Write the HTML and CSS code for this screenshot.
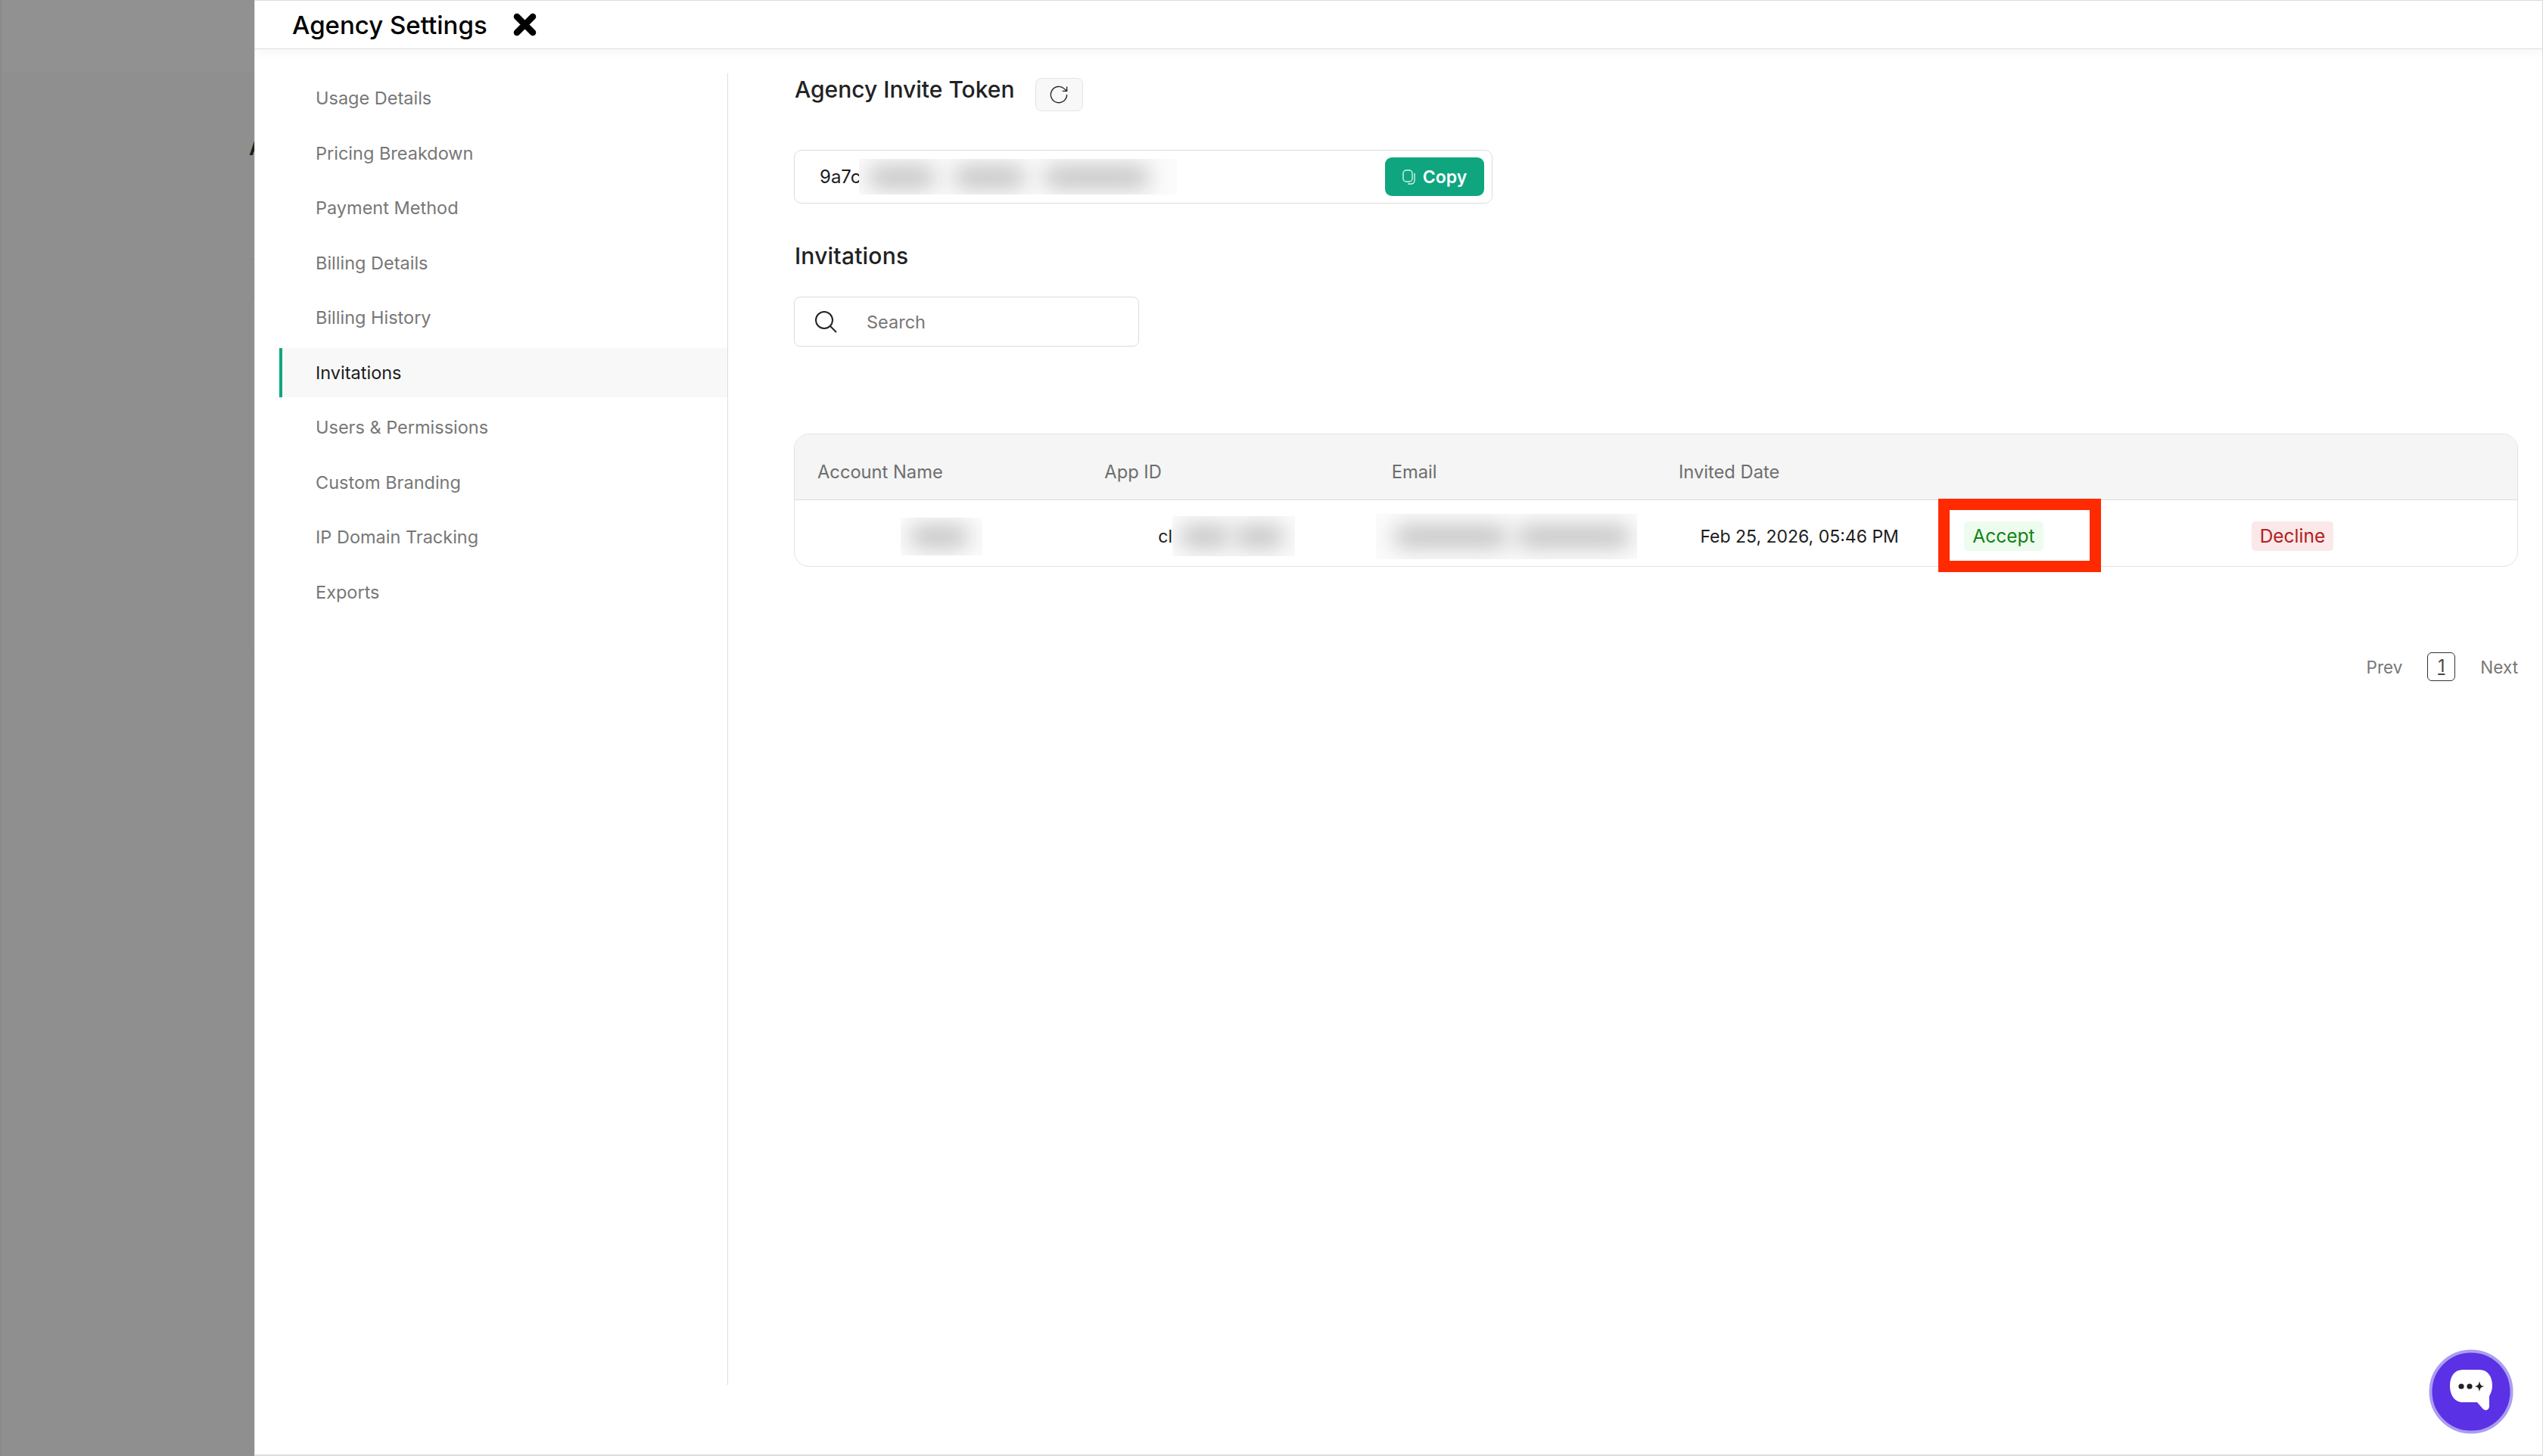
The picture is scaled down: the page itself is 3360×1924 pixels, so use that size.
FILE: index.html
```html
<!DOCTYPE html>
<html lang="en">
<head>
    <meta charset="UTF-8">
    <title>Agency Settings</title>
    <link rel="stylesheet" href="styles.css">
</head>
<body>
    <div class="backdrop">
        <div class="backdrop-band"></div>
        <div class="backdrop-title">A</div>
        <div class="backdrop-rule"></div>
        <div class="backdrop-card"></div>
    </div>

    <div class="drawer">
        <div class="drawer-header">
            <h1>Agency Settings</h1>
            <svg class="close-icon" viewBox="0 0 31 31">
                <path d="M5 5 26 26M26 5 5 26" fill="none" stroke="#000" stroke-width="8.5" stroke-linecap="round"/>
            </svg>
        </div>

        <div class="drawer-body">
            <div class="sidebar">
                <div class="nav-item">Usage Details</div>
                <div class="nav-item">Pricing Breakdown</div>
                <div class="nav-item">Payment Method</div>
                <div class="nav-item">Billing Details</div>
                <div class="nav-item">Billing History</div>
                <div class="nav-item active">Invitations</div>
                <div class="nav-item">Users &amp; Permissions</div>
                <div class="nav-item">Custom Branding</div>
                <div class="nav-item">IP Domain Tracking</div>
                <div class="nav-item">Exports</div>
            </div>

            <div class="main">
                <div class="token-title-row">
                    <h2>Agency Invite Token</h2>
                    <button class="refresh-btn">
                        <svg viewBox="0 0 24 24" width="30" height="30">
                            <path d="M20.5 12a8.5 8.5 0 1 1-2.6-6.1L20.5 8.3M20.5 3.6v4.7h-4.7" fill="none" stroke="#222" stroke-width="1.1"/>
                        </svg>
                    </button>
                </div>

                <div class="token-box">
                    <span class="token-value">9a7c</span>
                    <div class="blur-mask token-mask">
                        <span class="blob" style="width: 89px"></span>
                        <span class="blob" style="width: 95px"></span>
                        <span class="blob" style="width: 140px"></span>
                    </div>
                    <button class="copy-btn">
                        <svg viewBox="0 0 18 20" width="18" height="20">
                            <rect x="1" y="1" width="12" height="15" rx="4" fill="none" stroke="#d5f2e9" stroke-width="1.4"/>
                            <path d="M16 5v9.5a4.5 4.5 0 0 1-4.5 4.5H7" fill="none" stroke="#d5f2e9" stroke-width="1.4"/>
                        </svg>
                        Copy
                    </button>
                </div>

                <h2 class="invitations-title">Invitations</h2>

                <div class="search-box">
                    <svg viewBox="0 0 30 30" width="30" height="30">
                        <circle cx="13" cy="13" r="11" fill="none" stroke="#222" stroke-width="2"/>
                        <path d="M21 21 29 29" fill="none" stroke="#222" stroke-width="2"/>
                    </svg>
                    <span class="search-text">Search</span>
                </div>

                <div class="table-block">
                    <table>
                        <thead>
                            <tr>
                                <th>Account Name</th>
                                <th>App ID</th>
                                <th>Email</th>
                                <th>Invited Date</th>
                                <th></th>
                                <th></th>
                            </tr>
                        </thead>
                        <tbody>
                            <tr>
                                <td class="center">
                                    <div class="blur-mask account-mask"><span class="blob" style="width: 78px"></span></div>
                                </td>
                                <td class="center">
                                    <div class="app-id">cl<div class="blur-mask app-mask"><span class="blob" style="width: 66px"></span><span class="blob" style="width: 66px"></span></div></div>
                                </td>
                                <td class="center">
                                    <div class="blur-mask email-mask"><span class="blob" style="width: 150px"></span><span class="blob" style="width: 150px"></span></div>
                                </td>
                                <td class="center">Feb 25, 2026, 05:46 PM</td>
                                <td><span class="pill accept">Accept</span></td>
                                <td><span class="pill decline">Decline</span></td>
                            </tr>
                        </tbody>
                    </table>
                    <div class="highlight"></div>
                </div>

                <div class="pagination">
                    <span>Prev</span>
                    <span class="page-num">1</span>
                    <span>Next</span>
                </div>
            </div>
        </div>
    </div>

    <div class="chat-btn">
        <svg viewBox="0 0 112 112" width="112" height="112">
            <circle cx="56" cy="56" r="53.5" fill="#5a31e4" stroke="#ab9df1" stroke-width="4"/>
            <path d="M45 27H67C78 27 84 36 84 48 84 54 82 58 80 62V75C80 81 74 82 71 78L64 70H45C34 70 28 60 28 48 28 36 34 27 45 27Z" fill="#fff"/>
            <circle cx="43" cy="49" r="3.6" fill="#222"/>
            <circle cx="54" cy="49" r="3.6" fill="#222"/>
            <path d="M67 42C68 47 69 48 73 49 69 50 68 51 67 56 66 51 65 50 61 49 65 48 66 47 67 42Z" fill="#222"/>
        </svg>
    </div>
</body>
</html>
```

FILE: styles.css
```css
* {
    margin: 0;
    padding: 0;
    box-sizing: border-box;
}

body {
    display: flex;
    width: 3360px;
    height: 1924px;
    overflow: hidden;
    background: white;
    font-family: Inter, "Liberation Sans", sans-serif;
    color: #1c1c1c;
}

/* dimmed page behind the drawer */
.backdrop {
    position: relative;
    width: 336px;
    flex-shrink: 0;
    overflow: hidden;
    background: #8f8f8f;
    border-left: 2px solid #8a8a8a;
}

.backdrop-band {
    height: 96px;
    background: #919191;
}

.backdrop-title {
    position: absolute;
    top: 178px;
    left: 327px;
    font-size: 28px;
    font-weight: 600;
    color: #1c1c1c;
}

.backdrop-rule {
    position: absolute;
    top: 342px;
    left: 326px;
    width: 20px;
    height: 1px;
    background: #888;
}

.backdrop-card {
    position: absolute;
    top: 394px;
    left: 327px;
    width: 40px;
    height: 470px;
    border: 1px solid #888;
    border-radius: 10px;
}

/* drawer */
.drawer {
    flex: 1;
    display: flex;
    flex-direction: column;
    border-top: 1px solid #ddd;
    border-left: 1px solid #e4e4e4;
    border-right: 1px solid #ddd;
    border-bottom: 2px solid #ddd;
}

.drawer-header {
    display: flex;
    align-items: center;
    gap: 34px;
    height: 64px;
    padding-left: 49px;
    border-bottom: 1px solid #ddd;
    box-shadow: 0 4px 14px rgba(0,0,0,0.04);
}

.drawer-header h1 {
    font-size: 33px;
    font-weight: 500;
    color: #000;
}

.close-icon {
    width: 31px;
    height: 31px;
}

.drawer-body {
    flex: 1;
    display: flex;
    align-items: flex-start;
}

.sidebar {
    display: flex;
    flex-direction: column;
    gap: 7.5px;
    width: 625px;
    height: 1733px;
    margin-top: 32px;
    padding-left: 32px;
    border-right: 1px solid #ddd;
}

.nav-item {
    display: flex;
    align-items: center;
    height: 65px;
    padding-left: 48px;
    font-size: 23.5px;
    color: #777;
}

.nav-item.active {
    padding-left: 44px;
    background: #f8f8f8;
    border-left: 4px solid #0fa67f;
    color: #1c1c1c;
}

.main {
    flex: 1;
    padding: 38px 32px 0 87px;
}

.token-title-row {
    display: flex;
    align-items: flex-start;
    gap: 27px;
    height: 44px;
}

.token-title-row h2 {
    margin-top: -3px;
}

h2 {
    font-size: 30px;
    font-weight: 500;
    line-height: 36px;
    color: #222;
    padding-left: 1px;
}

.refresh-btn {
    display: flex;
    align-items: center;
    justify-content: center;
    width: 63px;
    height: 44px;
    background: #f8f8f8;
    border: 1px solid #e4e4e4;
    border-radius: 8px;
}

.token-box {
    position: relative;
    display: flex;
    align-items: center;
    width: 923px;
    height: 71px;
    margin-top: 51px;
    padding: 0 10px 0 33px;
    border: 1px solid #dcdcdc;
    border-radius: 10px;
}

.token-value {
    font-size: 24px;
    width: 52px;
}

.blur-mask {
    display: flex;
    align-items: center;
    gap: 24px;
    overflow: hidden;
    background: #fbfbfb;
}

.blob {
    display: block;
    height: 30px;
    flex-shrink: 0;
    background: #c4c4c4;
    border-radius: 14px;
    filter: blur(14px);
}

.token-mask {
    width: 420px;
    height: 47px;
    padding-left: 12px;
}

.copy-btn {
    display: flex;
    align-items: center;
    justify-content: center;
    gap: 9px;
    width: 131px;
    height: 51px;
    margin-left: auto;
    background: #0fa67f;
    border: none;
    border-radius: 9px;
    color: white;
    font-family: inherit;
    font-size: 23px;
    font-weight: 600;
}

.invitations-title {
    margin-top: 51px;
    letter-spacing: 0.2px;
}

.search-box {
    display: flex;
    align-items: center;
    width: 456px;
    height: 66px;
    margin-top: 36px;
    padding-left: 26px;
    border: 1px solid #dcdcdc;
    border-radius: 8px;
}

.search-text {
    margin-left: 39px;
    font-size: 23.5px;
    color: #777;
}

.table-block {
    position: relative;
    margin-top: 115px;
}

table {
    width: 100%;
    table-layout: fixed;
    border-collapse: separate;
    border-spacing: 0;
    border: 1px solid #e2e2e2;
    border-radius: 20px;
}

th {
    height: 87px;
    padding: 13px 0 0 30px;
    background: #f5f5f5;
    border-bottom: 1px solid #dcdcdc;
    font-size: 23.7px;
    font-weight: 400;
    color: #6e6e6e;
    text-align: left;
}

th:first-child { border-top-left-radius: 20px; }
th:last-child { border-top-right-radius: 20px; }

td {
    height: 87px;
    padding: 8px 0 0 28px;
    font-size: 23px;
    color: #1c1c1c;
}

td.center {
    padding-left: 0;
    text-align: center;
}

.account-mask {
    width: 108px;
    height: 50px;
    margin-left: 140px;
    padding-left: 12px;
}

.app-id {
    display: flex;
    align-items: center;
    margin-left: 101px;
}

.app-mask {
    width: 162px;
    height: 53px;
    gap: 6px;
    padding-left: 10px;
}

.email-mask {
    width: 345px;
    height: 60px;
    gap: 12px;
    margin-left: 9px;
    padding-left: 24px;
}

.pill {
    display: inline-block;
    padding: 0 11px;
    line-height: 39px;
    border-radius: 5px;
    font-size: 24.5px;
}

.accept {
    background: #eefcef;
    color: #0f8414;
}

.decline {
    background: #fbe8e8;
    color: #b02121;
}

/* red marker drawn over the screenshot */
.highlight {
    position: absolute;
    top: 86px;
    left: 1512px;
    width: 215px;
    height: 97px;
    border: 15px solid #ff2a00;
}

.pagination {
    display: flex;
    justify-content: flex-end;
    align-items: center;
    gap: 33px;
    margin-top: 113px;
    font-size: 22.5px;
    color: #777;
}

.page-num {
    width: 37px;
    height: 38px;
    border: 1.5px solid #333;
    border-radius: 6px;
    line-height: 34px;
    text-align: center;
    text-decoration: underline;
    color: #444;
}

.chat-btn {
    position: absolute;
    left: 3209px;
    top: 1783px;
    width: 112px;
    height: 112px;
}
```
